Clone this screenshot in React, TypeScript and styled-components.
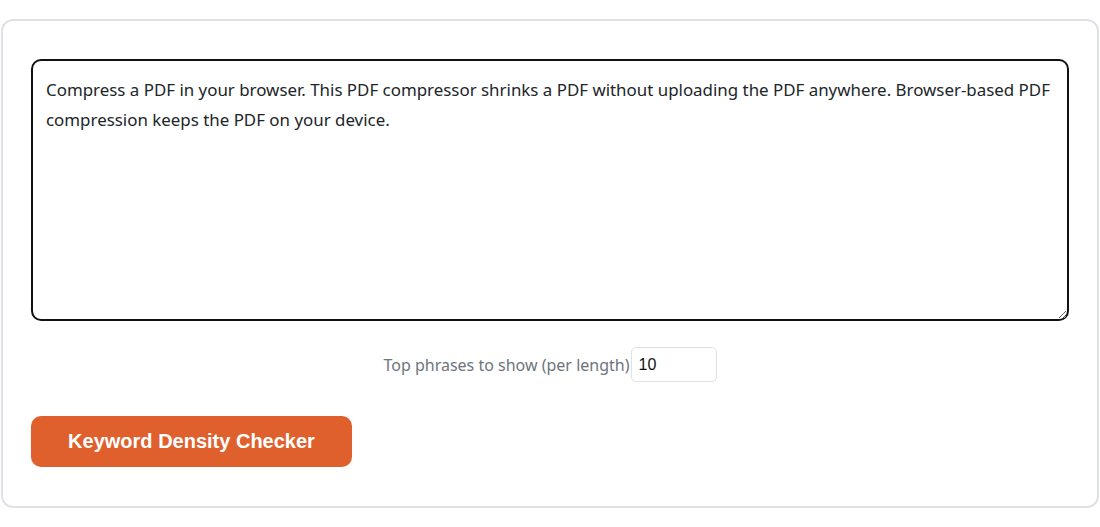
import styled, { createGlobalStyle } from 'styled-components';

const GlobalStyle = createGlobalStyle`
  * { box-sizing: border-box; }
  body {
    margin: 0;
    background: #ffffff;
    font-family: "Noto Sans", "Open Sans", sans-serif;
  }
`;

const Page = styled.main`
  padding: 19px 1px 0 1px;
`;

const Card = styled.section`
  border: 2px solid #dee2e6;
  border-radius: 12px;
  padding: 38px 28px 38px 28px;
  height: 489px;
  display: flex;
  flex-direction: column;
`;

const TextArea = styled.textarea`
  display: block;
  width: 100%;
  height: 262px;
  border: 2px solid #111111;
  border-radius: 10px;
  padding: 14px 4px 14px 13px;
  font-family: "Noto Sans", "Open Sans", sans-serif;
  font-size: 16.9px;
  line-height: 30px;
  color: #212529;
  resize: vertical;
  outline: none;
`;

const OptionRow = styled.div`
  display: flex;
  justify-content: center;
  align-items: center;
  margin-top: 26px;
`;

const Label = styled.label`
  font-size: 16px;
  color: #6c757d;
  font-family: "Noto Sans", "Open Sans", sans-serif;
`;

const NumberInput = styled.input`
  width: 86px;
  height: 35px;
  margin-left: 1px;
  border: 1px solid #dee2e6;
  border-radius: 5px;
  padding: 0 7px;
  font-family: "Liberation Sans", Arial, sans-serif;
  font-size: 16px;
  color: #111;
  outline: none;
`;

const ActionButton = styled.button`
  align-self: flex-start;
  margin-top: 34px;
  width: 321px;
  height: 51px;
  border: none;
  border-radius: 10px;
  background: #e0602d;
  color: #ffffff;
  font-family: "Liberation Sans", Arial, sans-serif;
  font-weight: 700;
  font-size: 20px;
  cursor: pointer;
`;

export default function App() {
  return (
    <>
      <GlobalStyle />
      <Page>
        <Card>
          <TextArea
            defaultValue="Compress a PDF in your browser. This PDF compressor shrinks a PDF without uploading the PDF anywhere. Browser-based PDF compression keeps the PDF on your device."
          />
          <OptionRow>
            <Label htmlFor="top">Top phrases to show (per length)</Label>
            <NumberInput id="top" type="text" defaultValue="10" />
          </OptionRow>
          <ActionButton>Keyword Density Checker</ActionButton>
        </Card>
      </Page>
    </>
  );
}
